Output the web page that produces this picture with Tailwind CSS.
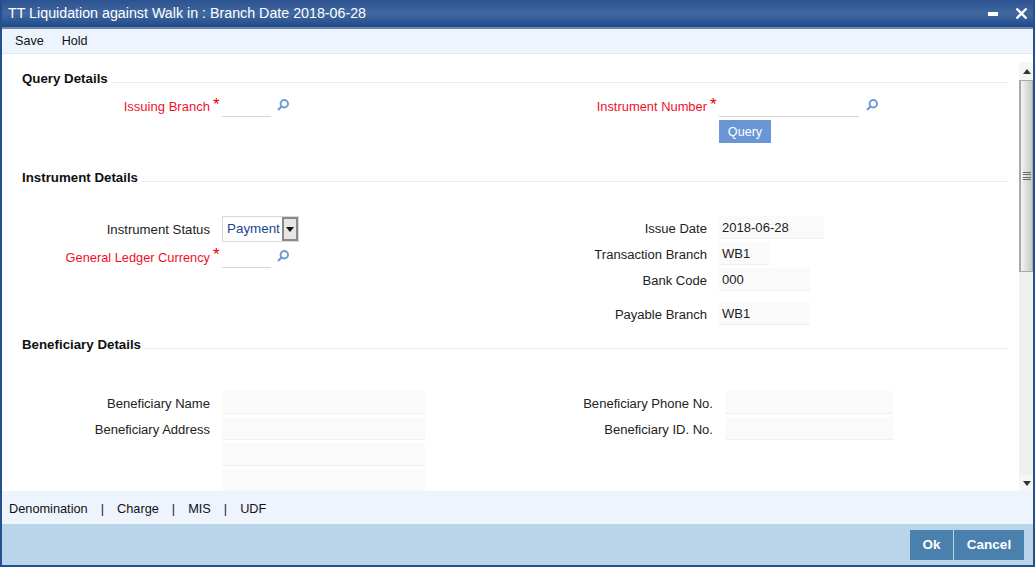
<!DOCTYPE html>
<html>
<head>
<meta charset="utf-8">
<script src="https://cdn.jsdelivr.net/npm/@tailwindcss/browser@4"></script>
</head>
<body class="m-0 bg-white">
<div class="w-[1035px] h-[567px] overflow-hidden flex flex-col font-['Liberation_Sans',Arial,sans-serif] border-x-2 border-b-2 border-[#23508f] box-border bg-white">
  <!-- title -->
  <div class="-mx-[2px] h-[29px] shrink-0 flex items-center justify-between bg-gradient-to-b from-[#2c5290] via-[#41689f] to-[#1f4a8b] border-b-2 border-[#6f88a8] pl-[8px] pr-[7px]">
    <span class="text-white text-[14.26px] leading-none">TT Liquidation against Walk in : Branch Date 2018-06-28</span>
    <div class="flex items-center gap-[17px]">
      <span class="block w-[10px] h-[4px] bg-white"></span>
      <svg width="13" height="13" viewBox="0 0 13 13"><path d="M1.5 1.5 L11.5 11.5 M11.5 1.5 L1.5 11.5" stroke="#fff" stroke-width="2.4" fill="none"/></svg>
    </div>
  </div>
  <!-- toolbar -->
  <div class="h-[25px] shrink-0 flex items-center gap-[18px] bg-[#eef4fd] border-b border-[#e4e9f0] pl-[13px] text-[12.6px] text-[#111]">
    <span>Save</span><span>Hold</span>
  </div>
  <!-- content -->
  <div class="h-[437px] shrink-0 flex overflow-hidden">
    <div class="w-[1017px] shrink-0 overflow-hidden text-[13.05px] text-[#222]">
      <!-- query -->
      <section class="h-[99px]">
        <div class="h-[29px] ml-[20px] w-[986px] border-b border-[#ededed] flex items-end"><h2 class="font-bold text-[13.3px] leading-[16px] mb-[-5px] text-[#111] bg-white pr-[3px]">Query Details</h2></div>
        <div class="grid grid-cols-[495px_1fr] mt-[10px]">
          <div class="flex">
            <div class="w-[220px] h-[24px] flex items-center justify-end shrink-0 pt-[4px]">
              <span class="text-[#f0102c]">Issuing Branch</span><span class="text-[#e00000] text-[17px] ml-[3px] w-[9px] -mt-[5px]">*</span>
            </div>
            <div class="w-[49px] h-[24px] border-b border-[#d5d5d5]"></div>
            <svg class="ml-[4.5px] mt-[5px]" width="14" height="14" viewBox="0 0 14 14"><circle cx="8.3" cy="5.7" r="3.7" fill="none" stroke="#6f9ad6" stroke-width="2"/><path d="M5.5 8.5 L2 12" stroke="#6f9ad6" stroke-width="2.2"/></svg>
          </div>
          <div class="flex">
            <div class="w-[222px] h-[24px] flex items-center justify-end shrink-0 pt-[4px]">
              <span class="text-[#f0102c] text-[12.9px]">Instrument Number</span><span class="text-[#e00000] text-[17px] ml-[3px] w-[9px] -mt-[5px]">*</span>
            </div>
            <div class="flex flex-col">
              <div class="flex">
                <div class="w-[140px] h-[24px] border-b border-[#d5d5d5]"></div>
                <svg class="ml-[5.5px] mt-[5px]" width="14" height="14" viewBox="0 0 14 14"><circle cx="8.3" cy="5.7" r="3.7" fill="none" stroke="#6f9ad6" stroke-width="2"/><path d="M5.5 8.5 L2 12" stroke="#6f9ad6" stroke-width="2.2"/></svg>
              </div>
              <button class="mt-[3px] w-[52px] h-[23px] bg-[#6b96d6] text-white text-[12.6px] leading-none pt-[2px]">Query</button>
            </div>
          </div>
        </div>
      </section>
      <!-- instrument -->
      <section class="h-[167px]">
        <div class="h-[29px] ml-[20px] w-[986px] border-b border-[#ededed] flex items-end"><h2 class="font-bold text-[13.3px] leading-[16px] mb-[-5px] text-[#111] bg-white pr-[3px]">Instrument Details</h2></div>
        <div class="grid grid-cols-[495px_1fr] mt-[34px]">
          <div class="flex flex-col">
            <div class="flex items-center h-[26px]">
              <span class="w-[208px] text-right mr-[12px] shrink-0 pt-[1px] text-[13.2px]">Instrument Status</span>
              <div class="w-[77px] h-[26px] flex border border-[#d8d8d8] items-center">
                <span class="w-[59px] pl-[4px] pt-[1px] text-[13.4px] text-[#1c4694]">Payment</span>
                <span class="w-[16px] h-[24px] flex items-center justify-center bg-[#e6e6e6] border-2 border-[#8a8a8a]">
                  <svg width="8" height="5" viewBox="0 0 8 5"><path d="M0 0 H8 L4 5 Z" fill="#111"/></svg>
                </span>
              </div>
            </div>
            <div class="flex mt-[1px]">
              <div class="w-[220px] h-[25px] flex items-center justify-end shrink-0 pt-[4px]">
                <span class="text-[#f0102c] text-[12.8px]">General Ledger Currency</span><span class="text-[#e00000] text-[17px] ml-[3px] w-[9px] -mt-[5px]">*</span>
              </div>
              <div class="w-[49px] h-[25px] border-b border-[#d5d5d5]"></div>
              <svg class="ml-[4.5px] mt-[6px]" width="14" height="14" viewBox="0 0 14 14"><circle cx="8.3" cy="5.7" r="3.7" fill="none" stroke="#6f9ad6" stroke-width="2"/><path d="M5.5 8.5 L2 12" stroke="#6f9ad6" stroke-width="2.2"/></svg>
            </div>
          </div>
          <div class="flex flex-col">
            <div class="flex items-center h-[23px]">
              <span class="w-[210px] text-right mr-[12px] shrink-0 pt-[2px]">Issue Date</span>
              <div class="w-[105px] h-[23px] bg-[#fafafa] border-b border-[#f0f0f0] pl-[3px] leading-[23px]">2018-06-28</div>
            </div>
            <div class="flex items-center h-[23px] mt-[3px]">
              <span class="w-[210px] text-right mr-[12px] shrink-0 pt-[2px]">Transaction Branch</span>
              <div class="w-[50px] h-[23px] bg-[#fafafa] border-b border-[#f0f0f0] pl-[3px] leading-[23px]">WB1</div>
            </div>
            <div class="flex items-center h-[23px] mt-[3px]">
              <span class="w-[210px] text-right mr-[12px] shrink-0 pt-[2px]">Bank Code</span>
              <div class="w-[91px] h-[23px] bg-[#fafafa] border-b border-[#f0f0f0] pl-[3px] leading-[23px]">000</div>
            </div>
            <div class="flex items-center h-[23px] mt-[11px]">
              <span class="w-[210px] text-right mr-[12px] shrink-0 pt-[2px]">Payable Branch</span>
              <div class="w-[91px] h-[23px] bg-[#fafafa] border-b border-[#f0f0f0] pl-[3px] leading-[23px]">WB1</div>
            </div>
          </div>
        </div>
      </section>
      <!-- beneficiary -->
      <section>
        <div class="h-[29px] ml-[20px] w-[986px] border-b border-[#ededed] flex items-end"><h2 class="font-bold text-[13.3px] leading-[16px] mb-[-5px] text-[#111] bg-white pr-[3px]">Beneficiary Details</h2></div>
        <div class="grid grid-cols-[495px_1fr] mt-[42px]">
          <div class="flex flex-col gap-[3px]">
            <div class="flex items-center h-[23px]">
              <span class="w-[208px] text-right mr-[12px] shrink-0 pt-[2px]">Beneficiary Name</span>
              <div class="w-[203px] h-[23px] bg-[#fafafa] border-b border-[#f0f0f0]"></div>
            </div>
            <div class="flex items-center h-[23px]">
              <span class="w-[208px] text-right mr-[12px] shrink-0 pt-[2px]">Beneficiary Address</span>
              <div class="w-[203px] h-[23px] bg-[#fafafa] border-b border-[#f0f0f0]"></div>
            </div>
            <div class="h-[23px] ml-[220px] w-[203px] bg-[#fafafa] border-b border-[#f0f0f0]"></div>
            <div class="h-[23px] ml-[220px] w-[203px] bg-[#fafafa] border-b border-[#f0f0f0]"></div>
          </div>
          <div class="flex flex-col gap-[3px]">
            <div class="flex items-center h-[23px]">
              <span class="w-[216px] text-right mr-[12px] shrink-0 pt-[2px]">Beneficiary Phone No.</span>
              <div class="w-[168px] h-[23px] bg-[#fafafa] border-b border-[#f0f0f0]"></div>
            </div>
            <div class="flex items-center h-[23px]">
              <span class="w-[216px] text-right mr-[12px] shrink-0 pt-[2px]">Beneficiary ID. No.</span>
              <div class="w-[168px] h-[23px] bg-[#fafafa] border-b border-[#f0f0f0]"></div>
            </div>
          </div>
        </div>
      </section>
    </div>
    <!-- scrollbar -->
    <div class="w-[15px] shrink-0 mt-[8px] flex flex-col bg-[#efefef]">
      <div class="h-[18px] flex items-center justify-center bg-[#f6f6f6]"><svg width="8" height="5" viewBox="0 0 8 5"><path d="M0 5 H8 L4 0 Z" fill="#333"/></svg></div>
      <div class="h-[192px] flex items-center justify-center bg-gradient-to-r from-[#f4f4f4] to-[#c9c9c9] border-x-2 border-t border-b border-[#a9a9a9]">
        <div class="w-[8px] h-[9px] flex flex-col justify-between"><span class="block h-px bg-[#666]"></span><span class="block h-px bg-[#666]"></span><span class="block h-px bg-[#666]"></span><span class="block h-px bg-[#666]"></span></div>
      </div>
      <div class="flex-1"></div>
      <div class="h-[16px] flex items-center justify-center bg-[#f6f6f6]"><svg width="8" height="5" viewBox="0 0 8 5"><path d="M0 0 H8 L4 5 Z" fill="#333"/></svg></div>
    </div>
  </div>
  <!-- tabs -->
  <div class="h-[33px] shrink-0 flex items-center bg-[#eef4fd] pl-[7px] pt-[2px] text-[12.75px] text-[#111]">
    <span>Denomination</span><span class="ml-[13px] text-[#301030]">|</span><span class="ml-[13px]">Charge</span><span class="ml-[13px] text-[#301030]">|</span><span class="ml-[13px]">MIS</span><span class="ml-[13px] text-[#301030]">|</span><span class="ml-[13px]">UDF</span>
  </div>
  <!-- footer -->
  <div class="flex-1 min-h-0 bg-[#bad5ea] flex items-start justify-end pt-[6px] pr-[9px] gap-px">
    <button class="w-[43px] h-[30px] bg-[#4a80ad] text-white text-[13.5px] font-bold leading-none">Ok</button>
    <button class="w-[70px] h-[30px] bg-[#4a80ad] text-white text-[13.5px] font-bold leading-none">Cancel</button>
  </div>
</div>
</body>
</html>
